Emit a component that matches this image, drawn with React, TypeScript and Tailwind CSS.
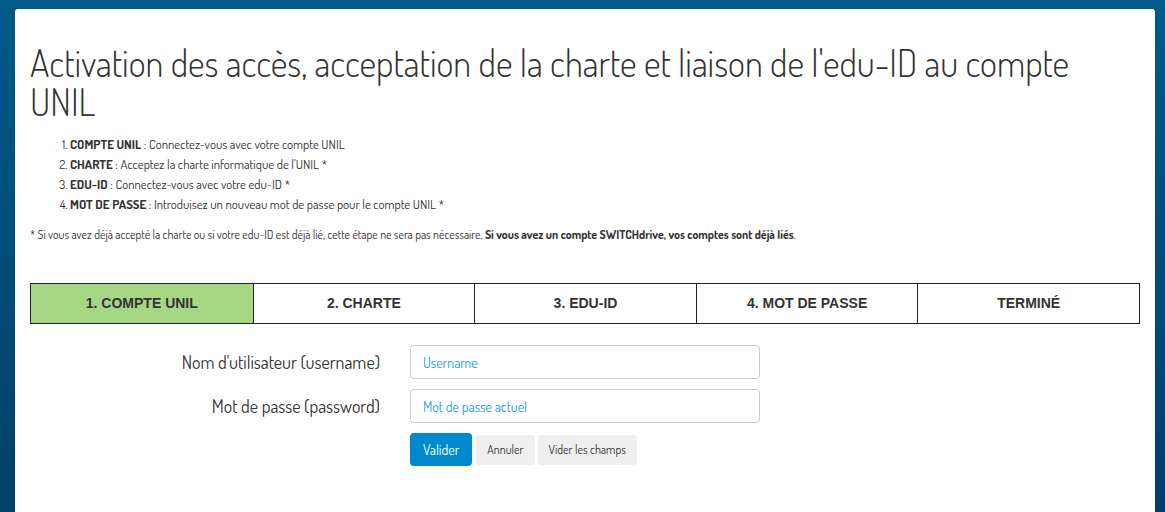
import React from "react";

const steps = [
  { n: "1.", title: "COMPTE UNIL", text: "Connectez-vous avec votre compte UNIL" },
  { n: "2.", title: "CHARTE", text: "Acceptez la charte informatique de l'UNIL *" },
  { n: "3.", title: "EDU-ID", text: "Connectez-vous avec votre edu-ID *" },
  { n: "4.", title: "MOT DE PASSE", text: "Introduisez un nouveau mot de passe pour le compte UNIL *" },
];

const tabs = ["1. COMPTE UNIL", "2. CHARTE", "3. EDU-ID", "4. MOT DE PASSE", "TERMINÉ"];

const dosis = "font-['Dosis','DejaVu_Sans_Condensed','Liberation_Sans_Narrow',sans-serif]";

export default function App() {
  return (
    <div className={`min-h-[512px] bg-gradient-to-b from-[#005b88] to-[#003f69] pl-[15px] pr-[10px] pt-[9px] ${dosis}`}>
      <div className="min-h-[503px] rounded-t-[3px] bg-white px-[15px] pb-10 text-[#333]">
        <h1 className="pt-[34px] text-[36.6px] font-light leading-[39px]">
          Activation des accès, acceptation de la charte et liaison de l'edu-ID au compte UNIL
        </h1>

        <ol className="mt-[13px] list-decimal pl-[40px] text-[12.8px] leading-[20px]">
          {steps.map((s) => (
            <li key={s.n}>
              <strong className="font-bold">{s.title}</strong> : {s.text}
            </li>
          ))}
        </ol>

        <p className="mt-[13px] text-[11.9px] leading-[16px]">
          * Si vous avez déjà accepté la charte ou si votre edu-ID est déjà lié, cette étape ne sera pas nécessaire.{" "}
          <strong className="font-bold">Si vous avez un compte SWITCHdrive, vos comptes sont déjà liés</strong>.
        </p>

        <div className="mt-[40px] grid grid-cols-5 border border-[#222] font-['Liberation_Sans',Arial,sans-serif]">
          {tabs.map((t, i) => (
            <div
              key={t}
              className={`flex h-[39px] items-center justify-center text-[14px] font-bold text-[#333] ${
                i > 0 ? "border-l border-[#222]" : "bg-[#a6d785]"
              }`}
            >
              {t}
            </div>
          ))}
        </div>

        <form className="mt-[21px] grid grid-cols-[350px_350px] gap-x-[30px] gap-y-[10px]">
          <label className="flex items-center justify-end text-[18px]">Nom d'utilisateur (username)</label>
          <input
            placeholder="Username"
            className="h-[34px] rounded-[4px] border border-[#ccc] px-3 text-[14px] placeholder:text-[#1da1e0]"
          />
          <label className="flex items-center justify-end text-[18px]">Mot de passe (password)</label>
          <input
            type="password"
            placeholder="Mot de passe actuel"
            className="h-[34px] rounded-[4px] border border-[#ccc] px-3 text-[14px] placeholder:text-[#1da1e0]"
          />
          <div />
          <div className="flex items-center text-[12px]">
            <button type="button" className="h-[33px] rounded-[4px] bg-[#0089cc] px-[13px] text-[14px] text-white">
              Valider
            </button>
            <button type="button" className="ml-[4px] h-[30px] rounded-[3px] bg-[#efefef] px-[11px] text-[#333]">
              Annuler
            </button>
            <button type="button" className="ml-[3px] h-[30px] rounded-[3px] bg-[#efefef] px-[11px] text-[#333]">
              Vider les champs
            </button>
          </div>
        </form>
      </div>
    </div>
  );
}
